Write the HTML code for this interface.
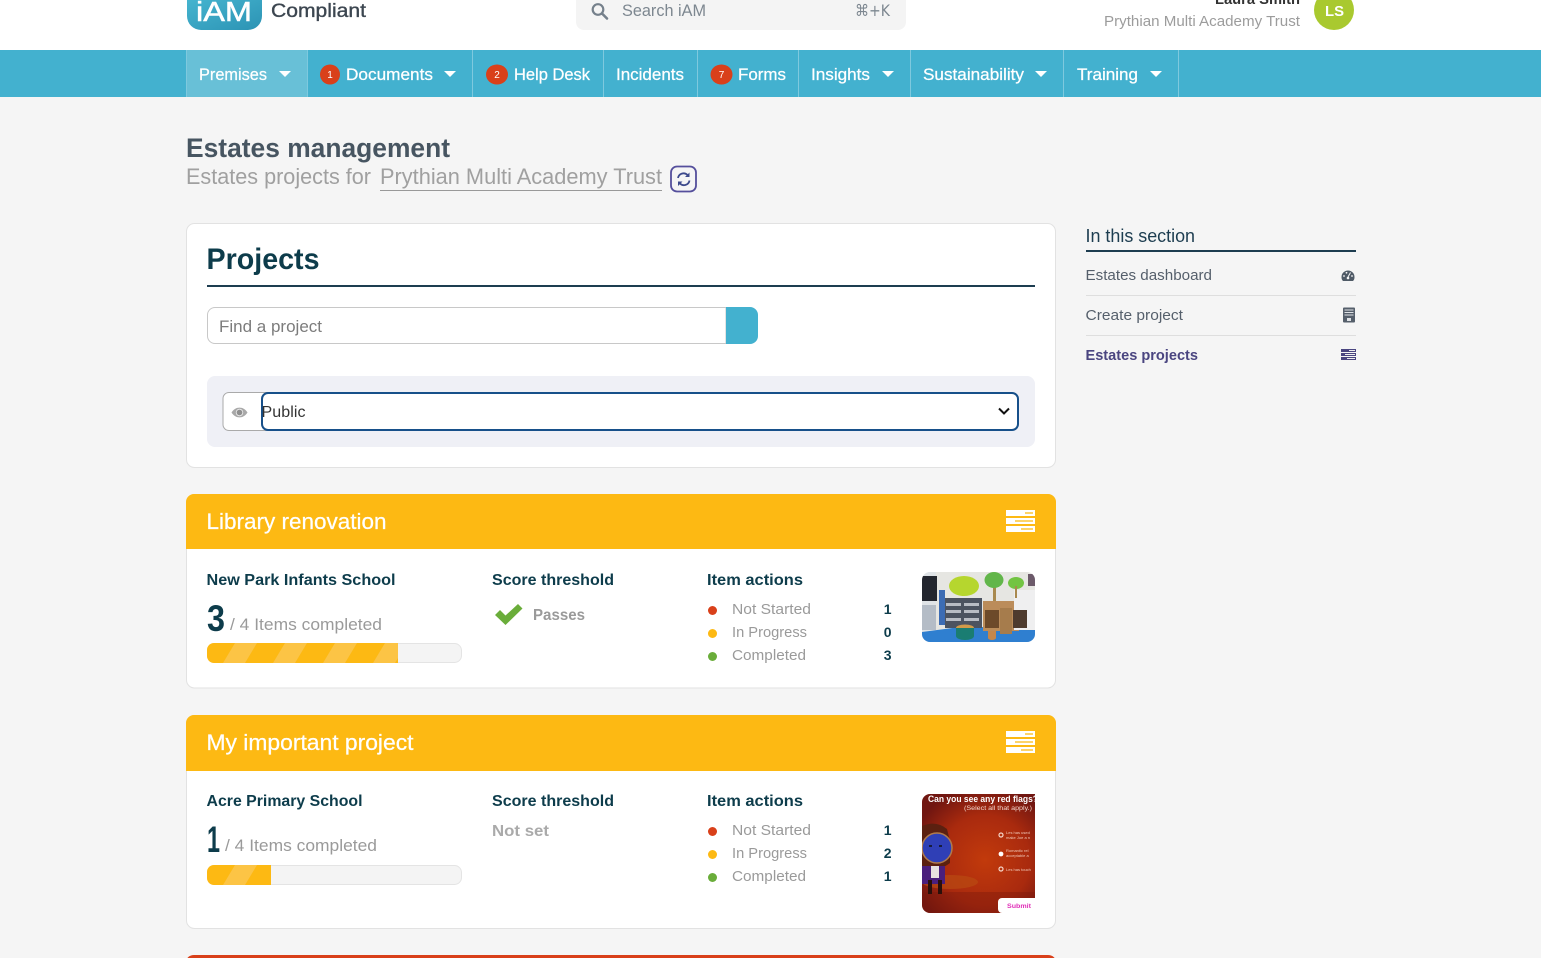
<!DOCTYPE html>
<html lang="en">
<head>
<meta charset="utf-8">
<title>Estates management</title>
<style>
html,body{margin:0;padding:0;width:1541px;height:958px;overflow:hidden;background:#f5f5f5}
svg{display:block}
text{font-family:"Liberation Sans",sans-serif;white-space:pre}
.nav{fill:#fff;font-size:17px;stroke:#fff;stroke-width:.25px}
.b{fill:#fff;font-size:10px;text-anchor:middle}
.h{fill:#0d3c4b;font-size:16px;font-weight:700}
.l{fill:#9a9a9a;font-size:15px}
.n{fill:#0d3c4b;font-size:14px;font-weight:700;text-anchor:end}
.t{fill:#fff;font-size:22px;stroke:#fff;stroke-width:.25px}
.s{fill:#555f6b;font-size:15px}
</style>
</head>
<body>
<svg width="1541" height="958" viewBox="0 0 1541 958" xmlns="http://www.w3.org/2000/svg">
<defs>
<linearGradient id="lg" x1="0" y1="0" x2="1" y2="1"><stop offset="0" stop-color="#45b4cf"/><stop offset="1" stop-color="#2c93b4"/></linearGradient>
<pattern id="st" width="50" height="20" patternUnits="userSpaceOnUse" x="207" y="643"><rect width="50" height="20" fill="#fdb913"/><path d="M16 20L28 0H50L38 20Z" fill="#fcc445"/></pattern>
<pattern id="st2" width="50" height="20" patternUnits="userSpaceOnUse" x="207" y="865"><rect width="50" height="20" fill="#fdb913"/><path d="M16 20L28 0H50L38 20Z" fill="#fcc445"/></pattern>
<clipPath id="c1"><rect x="922" y="572" width="113" height="70" rx="8"/></clipPath>
<clipPath id="c2"><path d="M930 794H1035V913H930a8 8 0 0 1-8-8V802a8 8 0 0 1 8-8Z"/></clipPath>
<radialGradient id="rd" gradientUnits="userSpaceOnUse" cx="985" cy="860" r="75"><stop offset="0" stop-color="#c23a0c"/><stop offset=".6" stop-color="#a92a0e"/><stop offset="1" stop-color="#701611"/></radialGradient>
</defs>
<rect width="1541" height="958" fill="#f5f5f5"/>

<!-- Header -->
<rect width="1541" height="50" fill="#fff"/>
<path d="M187 0H262V16a14 14 0 0 1-14 14H201a14 14 0 0 1-14-14Z" fill="url(#lg)"/>
<text x="196" y="21" fill="#fff" stroke="#fff" stroke-width=".5" textLength="56" lengthAdjust="spacingAndGlyphs" style="font-size:28px">iAM</text>
<text x="271" y="17" fill="#3c4650" stroke="#3c4650" stroke-width=".35" style="font-size:19px" textLength="95" lengthAdjust="spacingAndGlyphs">Compliant</text>

<path d="M576 0H906V22a8 8 0 0 1-8 8H584a8 8 0 0 1-8-8Z" fill="#f4f4f4"/>
<circle cx="598" cy="9.500" r="5.300" fill="none" stroke="#75808b" stroke-width="2.200"/><path d="M602 13.500L607 18.500" stroke="#75808b" stroke-width="2.600" stroke-linecap="round"/>
<text x="622" y="16" fill="#7d8790" style="font-size:17px" textLength="84" lengthAdjust="spacingAndGlyphs">Search iAM</text>
<text x="855" y="16" fill="#7d8790" style="font-size:16px;font-family:'DejaVu Sans','Liberation Sans',sans-serif" textLength="35" lengthAdjust="spacingAndGlyphs">⌘+K</text>

<text x="1215" y="4" fill="#333" style="font-size:15px;font-weight:700" textLength="85" lengthAdjust="spacingAndGlyphs">Laura Smith</text>
<text x="1104" y="26" fill="#9c9c9c" style="font-size:15px" textLength="196" lengthAdjust="spacingAndGlyphs">Prythian Multi Academy Trust</text>
<circle cx="1334" cy="10" r="20" fill="#a9c92f"/>
<text x="1325" y="16" fill="#fff" style="font-size:15px;font-weight:700" textLength="19" lengthAdjust="spacingAndGlyphs">LS</text>

<!-- Nav -->
<rect y="50" width="1541" height="47" fill="#43b1cf"/>
<rect x="186" y="50" width="121" height="47" fill="#68c0d7"/>
<g fill="#7ec9de"><rect x="186" y="50" width="1" height="47"/><rect x="307" y="50" width="1" height="47"/><rect x="472" y="50" width="1" height="47"/><rect x="603" y="50" width="1" height="47"/><rect x="697" y="50" width="1" height="47"/><rect x="798" y="50" width="1" height="47"/><rect x="910" y="50" width="1" height="47"/><rect x="1063" y="50" width="1" height="47"/><rect x="1178" y="50" width="1" height="47"/></g>
<text class="nav" x="199" y="80" textLength="68" lengthAdjust="spacingAndGlyphs">Premises</text>
<path d="M279 71H291L285 77Z" fill="#fff"/>
<ellipse cx="330" cy="74.500" rx="10" ry="10" fill="#d9401a"/><text class="b" x="330" y="78">1</text>
<text class="nav" x="346" y="80" textLength="87" lengthAdjust="spacingAndGlyphs">Documents</text>
<path d="M444 71H456L450 77Z" fill="#fff"/>
<ellipse cx="497" cy="74.500" rx="11" ry="10" fill="#d9401a"/><text class="b" x="497" y="78">2</text>
<text class="nav" x="514" y="80" textLength="76" lengthAdjust="spacingAndGlyphs">Help Desk</text>
<text class="nav" x="616" y="80" textLength="68" lengthAdjust="spacingAndGlyphs">Incidents</text>
<ellipse cx="721.500" cy="74.500" rx="11" ry="10" fill="#d9401a"/><text class="b" x="721.500" y="78">7</text>
<text class="nav" x="738" y="80" textLength="48" lengthAdjust="spacingAndGlyphs">Forms</text>
<text class="nav" x="811" y="80" textLength="59" lengthAdjust="spacingAndGlyphs">Insights</text>
<path d="M882 71H894L888 77Z" fill="#fff"/>
<text class="nav" x="923" y="80" textLength="101" lengthAdjust="spacingAndGlyphs">Sustainability</text>
<path d="M1035 71H1047L1041 77Z" fill="#fff"/>
<text class="nav" x="1077" y="80" textLength="61" lengthAdjust="spacingAndGlyphs">Training</text>
<path d="M1150 71H1162L1156 77Z" fill="#fff"/>

<!-- Page title -->
<text x="186" y="157" fill="#475561" style="font-size:27px;font-weight:700" textLength="264" lengthAdjust="spacingAndGlyphs">Estates management</text>
<text x="186" y="184" fill="#a0a0a0" style="font-size:22px" textLength="185" lengthAdjust="spacingAndGlyphs">Estates projects for</text>
<text x="380" y="184" fill="#a0a0a0" style="font-size:22px" textLength="282" lengthAdjust="spacingAndGlyphs">Prythian Multi Academy Trust</text>
<rect x="380" y="190" width="282" height="1" fill="#999"/>
<rect x="671" y="166.500" width="25" height="25" rx="6" fill="none" stroke="#554f9c" stroke-width="1.800"/>
<path d="M678 178a5.600 5.600 0 0 1 9.500-3M689.500 180.500a5.600 5.600 0 0 1-9.500 3" fill="none" stroke="#3d4a8c" stroke-width="1.800"/>
<path d="M689.500 172.500V177H685ZM678 186V181.500H682.500Z" fill="#3d4a8c"/>

<!-- Projects card -->
<rect x="186.500" y="223.500" width="869" height="244" rx="8" fill="#fff" stroke="#e2e2e2"/>
<text x="206.500" y="269" fill="#0d3c4b" style="font-size:30px;font-weight:700" textLength="113" lengthAdjust="spacingAndGlyphs">Projects</text>
<rect x="207" y="285" width="828" height="2" fill="#1d3d50"/>
<path d="M726 307.500H215a7.500 7.500 0 0 0-7.500 7.500V336a7.500 7.500 0 0 0 7.500 7.500H726Z" fill="#fff" stroke="#c8c8c8"/>
<text x="219" y="332" fill="#7c7c7c" style="font-size:17px" textLength="103" lengthAdjust="spacingAndGlyphs">Find a project</text>
<path d="M726 307H750a8 8 0 0 1 8 8V336a8 8 0 0 1-8 8H726Z" fill="#43b1cf"/>
<rect x="207" y="376" width="828" height="71" rx="8" fill="#eff0f6"/>
<path d="M268 392.500H229a6 6 0 0 0-6 6V424.500a6 6 0 0 0 6 6H268Z" fill="#fff" stroke="#aaa"/>
<path d="M231.500 412.500c4-6.500 12-6.500 16 0c-4 6.500-12 6.500-16 0Z" fill="#a8a8a8"/><circle cx="239.500" cy="412.500" r="3.300" fill="#8f8f8f" stroke="#eee" stroke-width=".8"/>
<rect x="262" y="393" width="756" height="37" rx="6" fill="#fff" stroke="#17508a" stroke-width="2"/>
<text x="261.500" y="417" fill="#333" style="font-size:16px" textLength="44">Public</text>
<path d="M999 408.500L1004 413.500L1009 408.500" fill="none" stroke="#111" stroke-width="2"/>

<!-- Project 1 -->
<rect x="186.500" y="494.500" width="869" height="193.500" rx="8" fill="#fff" stroke="#e2e2e2"/>
<path d="M194 494H1048a8 8 0 0 1 8 8V549H186V502a8 8 0 0 1 8-8Z" fill="#fdb913"/>
<text class="t" x="206.500" y="529" textLength="180" lengthAdjust="spacingAndGlyphs">Library renovation</text>
<g><rect x="1006" y="510" width="29" height="6" fill="#fff"/><rect x="1006" y="518" width="29" height="6" fill="#fff"/><rect x="1006" y="526" width="29" height="6" fill="#fff"/><rect x="1025" y="512" width="8" height="2" fill="#fdd46a"/><rect x="1015" y="520" width="18" height="2" fill="#fdd46a"/><rect x="1021" y="528" width="12" height="2" fill="#fdd46a"/></g>
<text class="h" x="206.500" y="585" textLength="189" lengthAdjust="spacingAndGlyphs">New Park Infants School</text>
<text class="h" x="492" y="585" textLength="122" lengthAdjust="spacingAndGlyphs">Score threshold</text>
<text class="h" x="707" y="585" textLength="96" lengthAdjust="spacingAndGlyphs">Item actions</text>
<text x="207" y="631" fill="#0d3c4b" style="font-size:37px;font-weight:700" textLength="18" lengthAdjust="spacingAndGlyphs">3</text>
<text x="230" y="630" fill="#9a9a9a" style="font-size:17px" textLength="152" lengthAdjust="spacingAndGlyphs">/ 4 Items completed</text>
<rect x="207.500" y="643.500" width="254" height="19" rx="7" fill="#f4f4f4" stroke="#e4e4e4"/>
<path d="M214 643H398V663H214a7 7 0 0 1-7-7V650a7 7 0 0 1 7-7Z" fill="url(#st)"/>
<path d="M495 615L500 610L505.500 615.500L518 604L522.500 608.500L505.500 625Z" fill="#6aad3a"/>
<text x="533" y="620" fill="#9a9a9a" style="font-size:16px;font-weight:700" textLength="52" lengthAdjust="spacingAndGlyphs">Passes</text>
<circle cx="712.500" cy="610.500" r="4.500" fill="#d9401a"/><circle cx="712.500" cy="633.500" r="4.500" fill="#fdb913"/><circle cx="712.500" cy="656.500" r="4.500" fill="#6aad3a"/>
<text class="l" x="732" y="614" textLength="79" lengthAdjust="spacingAndGlyphs">Not Started</text>
<text class="l" x="732" y="637" textLength="75" lengthAdjust="spacingAndGlyphs">In Progress</text>
<text class="l" x="732" y="660" textLength="74" lengthAdjust="spacingAndGlyphs">Completed</text>
<text class="n" x="891.500" y="614">1</text><text class="n" x="891.500" y="637">0</text><text class="n" x="891.500" y="660">3</text>
<g clip-path="url(#c1)">
<rect x="922" y="572" width="113" height="70" fill="#e6e6e2"/>
<rect x="922" y="572" width="14" height="60" fill="#dfe3e6"/>
<rect x="922" y="576" width="15" height="25" fill="#23262e"/>
<rect x="939" y="590" width="6" height="35" fill="#3c6cb4"/>
<rect x="922" y="605" width="14" height="25" fill="#b4bcc6"/>
<path d="M922 642V632L960 627H1035V642Z" fill="#2f7fd0"/>
<rect x="945" y="598" width="37" height="30" fill="#4c5360"/>
<g fill="#b8bcc4"><rect x="946" y="603" width="15" height="3"/><rect x="964" y="603" width="15" height="3"/><rect x="946" y="610" width="15" height="3"/><rect x="964" y="610" width="15" height="3"/><rect x="946" y="618" width="15" height="3"/><rect x="964" y="618" width="15" height="3"/></g>
<rect x="962" y="582" width="3" height="14" fill="#a8894e"/>
<ellipse cx="964" cy="586" rx="15" ry="10" fill="#b6d62e"/>
<rect x="983" y="601" width="36" height="30" fill="#bb8c5a"/>
<rect x="985" y="610" width="14" height="18" fill="#6d4a2a"/>
<rect x="1000" y="608" width="12" height="26" fill="#a67c4c"/>
<rect x="1014" y="590" width="21" height="40" fill="#efeff0"/>
<rect x="1013" y="610" width="14" height="18" fill="#4e3b2e"/>
<rect x="993" y="583" width="3" height="18" fill="#a8894e"/>
<ellipse cx="994" cy="580" rx="9.500" ry="8" fill="#62b64a"/>
<ellipse cx="1016" cy="583" rx="8" ry="6" fill="#72c442"/>
<rect x="1015" y="586" width="2" height="12" fill="#a8894e"/>
<ellipse cx="965" cy="628" rx="9" ry="3.500" fill="#d19a4a"/>
<path d="M956 628v8a9 4 0 0 0 18 0v-8Z" fill="#1a7d72"/>
<path d="M988 631v7a4 2 0 0 0 8 0v-7Z" fill="#c4874c"/>
<rect x="1028" y="574" width="7" height="12" fill="#6c5a6a"/>
</g>

<!-- Project 2 -->
<rect x="186.500" y="715.500" width="869" height="213" rx="8" fill="#fff" stroke="#e2e2e2"/>
<path d="M194 715H1048a8 8 0 0 1 8 8V771H186V723a8 8 0 0 1 8-8Z" fill="#fdb913"/>
<text class="t" x="206.500" y="750" textLength="207" lengthAdjust="spacingAndGlyphs">My important project</text>
<g><rect x="1006" y="731" width="29" height="6" fill="#fff"/><rect x="1006" y="739" width="29" height="6" fill="#fff"/><rect x="1006" y="747" width="29" height="6" fill="#fff"/><rect x="1025" y="733" width="8" height="2" fill="#fdd46a"/><rect x="1015" y="741" width="18" height="2" fill="#fdd46a"/><rect x="1021" y="749" width="12" height="2" fill="#fdd46a"/></g>
<text class="h" x="206.500" y="806" textLength="156" lengthAdjust="spacingAndGlyphs">Acre Primary School</text>
<text class="h" x="492" y="806" textLength="122" lengthAdjust="spacingAndGlyphs">Score threshold</text>
<text class="h" x="707" y="806" textLength="96" lengthAdjust="spacingAndGlyphs">Item actions</text>
<text x="207" y="852" fill="#0d3c4b" style="font-size:37px;font-weight:700" textLength="13" lengthAdjust="spacingAndGlyphs">1</text>
<text x="225" y="851" fill="#9a9a9a" style="font-size:17px" textLength="152" lengthAdjust="spacingAndGlyphs">/ 4 Items completed</text>
<rect x="207.500" y="865.500" width="254" height="19" rx="7" fill="#f4f4f4" stroke="#e4e4e4"/>
<path d="M214 865H271V885H214a7 7 0 0 1-7-7V872a7 7 0 0 1 7-7Z" fill="url(#st2)"/>
<text x="492" y="836" fill="#aaa" style="font-size:16px;font-weight:700" textLength="57" lengthAdjust="spacingAndGlyphs">Not set</text>
<circle cx="712.500" cy="831.500" r="4.500" fill="#d9401a"/><circle cx="712.500" cy="854.500" r="4.500" fill="#fdb913"/><circle cx="712.500" cy="877.500" r="4.500" fill="#6aad3a"/>
<text class="l" x="732" y="835" textLength="79" lengthAdjust="spacingAndGlyphs">Not Started</text>
<text class="l" x="732" y="858" textLength="75" lengthAdjust="spacingAndGlyphs">In Progress</text>
<text class="l" x="732" y="881" textLength="74" lengthAdjust="spacingAndGlyphs">Completed</text>
<text class="n" x="891.500" y="835">1</text><text class="n" x="891.500" y="858">2</text><text class="n" x="891.500" y="881">1</text>
<g clip-path="url(#c2)">
<rect x="922" y="794" width="113" height="119" fill="url(#rd)"/>
<rect x="922" y="892" width="113" height="21" fill="#7a1a0c" opacity=".4"/>
<ellipse cx="950" cy="882" rx="28" ry="7" fill="#b94a12" opacity=".7"/>
<text x="928" y="802" fill="#fff" style="font-size:9px;font-weight:700" textLength="110" lengthAdjust="spacingAndGlyphs">Can you see any red flags?</text>
<text x="964" y="810" fill="#f1d5cc" style="font-size:6.500px" textLength="68" lengthAdjust="spacingAndGlyphs">(Select all that apply.)</text>
<circle cx="1001" cy="835" r="2" fill="none" stroke="#f5d5c8" stroke-width="1.200"/>
<circle cx="1001" cy="854" r="2.400" fill="#fff"/>
<circle cx="1001" cy="869" r="2" fill="none" stroke="#f5d5c8" stroke-width="1.200"/>
<text x="1006" y="834" fill="#f0c8b8" style="font-size:4px">Les has used</text><text x="1006" y="839" fill="#f0c8b8" style="font-size:4px">make Joe a n</text>
<text x="1006" y="852" fill="#f0c8b8" style="font-size:4px">Romantic rel</text><text x="1006" y="857" fill="#f0c8b8" style="font-size:4px">acceptable a</text>
<text x="1006" y="871" fill="#f0c8b8" style="font-size:4px">Les has touch</text>
<path d="M922 826q14-6 25 3l3 12v22q-10 8-28 6Z" fill="#5b2010"/>
<path d="M922 866h23v18h-23Z" fill="#4a1f7c"/>
<rect x="928" y="880" width="4" height="14" fill="#2a0f0a"/><rect x="938" y="880" width="4" height="14" fill="#2a0f0a"/>
<rect x="931" y="866" width="8" height="12" fill="#e8e2e0"/>
<circle cx="937" cy="848" r="15" fill="#2f3fb6"/>
<circle cx="937" cy="848" r="15" fill="none" stroke="#b07a4c" stroke-width="1.500"/>
<path d="M929 846h3M939 846h3" stroke="#111" stroke-width="1.500"/>
<path d="M1002 898h33v15h-33a4 4 0 0 1-4-4v-7a4 4 0 0 1 4-4Z" fill="#fff"/>
<text x="1007" y="908" fill="#e02fb8" style="font-size:6.500px;font-weight:700" textLength="24" lengthAdjust="spacingAndGlyphs">Submit</text>
</g>

<!-- Project 3 peek -->
<rect x="186" y="955" width="870" height="14" rx="8" fill="#d9401a"/>

<!-- Sidebar -->
<text x="1085.500" y="242" fill="#1d3d50" style="font-size:18px" textLength="109.500" lengthAdjust="spacingAndGlyphs">In this section</text>
<rect x="1086" y="250" width="270" height="2" fill="#1d3d50"/>
<text class="s" x="1085.500" y="280" textLength="126.500" lengthAdjust="spacingAndGlyphs">Estates dashboard</text>
<rect x="1086" y="295" width="270" height="1" fill="#dedede"/>
<text class="s" x="1085.500" y="320" textLength="97.500" lengthAdjust="spacingAndGlyphs">Create project</text>
<rect x="1086" y="335" width="270" height="1" fill="#dedede"/>
<text x="1085.500" y="360" fill="#4a4580" style="font-size:15px;font-weight:700" textLength="112.500" lengthAdjust="spacingAndGlyphs">Estates projects</text>
<path d="M1341.500 277a6.500 6.500 0 0 1 13 0c0 2-.5 3-1.500 4h-10c-1-1-1.500-2-1.500-4Z" fill="#4f5a66"/><path d="M1348 277L1350.500 272.500" stroke="#f5f5f5" stroke-width="1"/><circle cx="1344" cy="276" r=".9" fill="#f5f5f5"/><circle cx="1346.500" cy="272.800" r=".9" fill="#f5f5f5"/><circle cx="1352" cy="276" r=".9" fill="#f5f5f5"/><circle cx="1348" cy="278" r="1.300" fill="#f5f5f5"/>
<rect x="1343" y="307.500" width="12" height="15" rx="1" fill="#555f6b"/><g fill="#dfe2e6"><rect x="1344.500" y="309.500" width="9" height="1"/><rect x="1344.500" y="312" width="9" height="1"/><rect x="1344.500" y="314.500" width="9" height="1"/><rect x="1347" y="318" width="4" height="3"/></g>
<g fill="#4a4580"><rect x="1341" y="349" width="15" height="3"/><rect x="1341" y="353" width="15" height="3"/><rect x="1341" y="357" width="15" height="3"/></g><g fill="#eee"><rect x="1349" y="350" width="6" height="1"/><rect x="1345" y="354" width="10" height="1"/><rect x="1347" y="358" width="8" height="1"/></g>
</svg>
</body>
</html>
